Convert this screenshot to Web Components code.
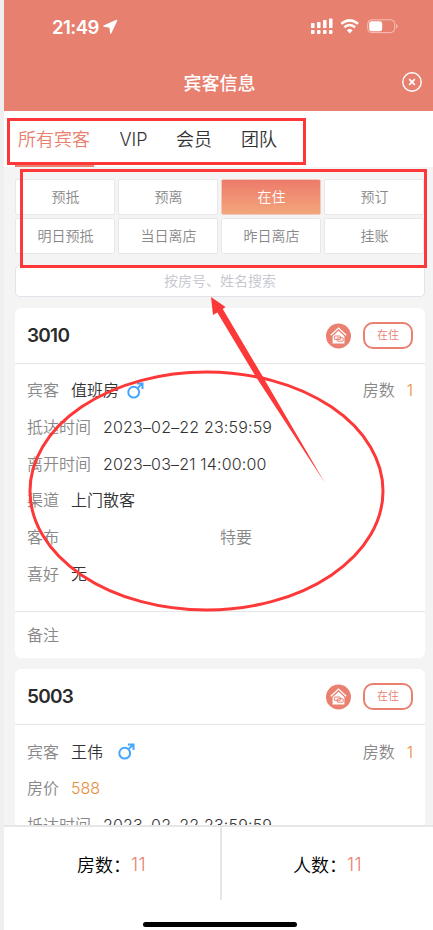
<!DOCTYPE html>
<html lang="zh-CN"><head><meta charset="utf-8"><title>宾客信息</title>
<style>
html,body{margin:0;height:930px;overflow:hidden}
body{background:#efefef;font-family:Inter,"Noto Sans CJK SC",sans-serif;-webkit-font-smoothing:antialiased}
</style></head><body>
<guest-app></guest-app>
<script>
const define=(name,html,init)=>customElements.define(name,class extends HTMLElement{
  constructor(){super();const r=this.attachShadow({mode:'open'});
    const t=document.createElement('template');t.innerHTML=html;r.append(t.content.cloneNode(true));}
  connectedCallback(){if(init)init(this,this.shadowRoot);}
});

define('status-bar',`<style>
:host{display:flex;box-sizing:border-box;height:54px;padding:0 35px 0 48px;align-items:center;color:#fff}
b{font-size:18.5px;font-weight:600;letter-spacing:-.5px;line-height:20px;width:50px;white-space:nowrap}
svg{display:block}.loc{margin-top:-1px}.r{margin-left:auto;margin-top:-1px}
</style><b>21:49</b>
<svg class="loc" width="16" height="16" viewBox="0 0 16 16"><path d="M14.6 1.4 1.9 7 7.9 8 8.8 14.1Z" fill="#fff" stroke="#fff" stroke-width="1.3" stroke-linejoin="round"/></svg>
<svg class="r" width="88" height="18" viewBox="0 0 88 18"><g fill="#fff">
<rect x="1" y="5" width="3.5" height="5" rx=".6"/><rect x="7" y="4" width="3.5" height="6" rx=".6"/><rect x="13" y="2" width="3.5" height="8" rx=".6"/><rect x="19" y=".5" width="3.5" height="9.5" rx=".6"/>
<rect x="1" y="12" width="3.5" height="4" rx=".9"/><rect x="7" y="12" width="3.5" height="4" rx=".9"/><rect x="13" y="12" width="3.5" height="4" rx=".9"/><rect x="19" y="12" width="3.5" height="4" rx=".9"/></g>
<g fill="none" stroke="#fff" stroke-width="2.6"><path d="M31.3 5.8Q39.7-1.2 48.1 5.8"/><path d="M34.3 9.2Q39.7 4.8 45.1 9.2"/></g><path d="M36.8 12.2Q39.7 9.9 42.6 12.2L39.7 15.4Z" fill="#fff"/>
<rect x="57.7" y="1.8" width="27" height="12.8" rx="4" fill="none" stroke="#fff" stroke-opacity=".5"/><rect x="59.2" y="3.2" width="13" height="10" rx="2.6" fill="#fff"/><path d="M86.2 6q1.3.4 1.3 2.2t-1.3 2.2z" fill="#fff" opacity=".55"/></svg>`);

define('title-bar',`<style>
:host{display:grid;grid-template-columns:42px 1fr 40px;height:57px;align-items:center;color:#fff;font-size:18px;font-weight:500;text-align:center}
svg{display:block;margin:-1px 0 0 8px}span{margin-top:-1px}
</style><i></i><span><slot></slot></span>
<svg width="22" height="22" viewBox="0 0 22 22" fill="none" stroke="#fff"><circle cx="11" cy="11" r="9.2" stroke-width="1.4"/><path d="m8.2 8.2 5.6 5.6m0-5.6-5.6 5.6" stroke-width="1.7"/></svg>`);

define('tab-item',`<style>
:host{display:block;height:56px;line-height:58px;font-size:18px;color:#333;box-sizing:border-box;white-space:nowrap;font-weight:350}
:host([active]){color:#ea8070;border-bottom:2px solid #ea8070;padding:0 4px 0 3px}
</style><slot></slot>`);
define('tab-row',`<style>:host{display:grid;grid-template-columns:104.5px 56.5px 65px 1fr;justify-items:start;padding-left:11px;height:56px;background:#fff}</style><slot></slot>`);

define('filter-chip',`<style>
:host{display:block;box-sizing:border-box;height:36px;border:1px solid #e8e8ea;border-radius:2px;background:#fff;color:#888;font-size:14px;line-height:34px;text-align:center;font-weight:350}
:host([active]){background:linear-gradient(#ed7b6a,#f3a67b);color:#fff;border-color:#f0c9bc}
</style><slot></slot>`);
define('filter-grid',`<style>:host{display:grid;grid-template-columns:repeat(4,100px);gap:3px;padding:12px 0 0 11.4px}</style><slot></slot>`);
define('search-box',`<style>
:host{display:block;box-sizing:border-box;height:32px;margin:11px 8px 0 11px;border:1px solid #e2e3ea;border-radius:5px;background:#fff;color:#c4c5ce;font-size:14px;line-height:30px;text-align:center;font-weight:350}
</style><slot></slot>`);

define('male-icon',`<style>:host{display:block;width:17px;height:17px;white-space:normal;line-height:0}svg{display:block}</style><svg width="17" height="17" viewBox="0 0 17 17" fill="none" stroke="#46a6ff" stroke-width="2"><circle cx="6.7" cy="10.2" r="5.4"/><path d="m10.4 6.4 4.7-4.6M9.9 1.5H15.5V7"/></svg>`);

define('info-row',`<style>
:host{display:flex;height:36.7px;line-height:36.7px;align-items:center;color:#333;font-size:16px;white-space:nowrap;font-weight:350}
.l{color:#888;margin-right:12px}
.v{display:flex;align-items:center;white-space:pre}
:host([date]) .v{letter-spacing:.17px}
:host([price]) .v{color:#e58e3c}
::slotted(male-icon){margin-left:8px}
.e{margin-left:auto;color:#888;display:flex}
</style><span class="l"></span><span class="v"><slot></slot></span><span class="e"><slot name="end"></slot></span>`,
(h,r)=>{r.querySelector('.l').textContent=h.getAttribute('label')});

define('guest-card',`<style>
:host{display:block;margin:0 8px 11px 11px;background:#fff;border-radius:6px}
header{display:flex;align-items:center;box-sizing:border-box;height:56px;padding:0 12px;border-bottom:1px solid #e6e6e6}
b{font-size:19px;font-weight:600;color:#2b2b2b;flex:1;letter-spacing:-.75px}
.s{box-sizing:border-box;width:50px;height:27px;line-height:23px;border:2px solid #ea8070;border-radius:10px;color:#ea8070;font-size:11px;text-align:center;margin-left:12px;font-weight:350}
.body{padding:8.4px 12px .6px}
</style><header><b></b>
<svg width="25" height="26" viewBox="0 0 25 26"><circle cx="12.5" cy="13" r="12.5" fill="#ea8070"/><path d="M4.8 12.3 12.5 5.1 20.2 12.3" fill="none" stroke="#fff" stroke-width="1.3"/><path d="M6.6 13.2 12.5 7.7 18.4 13.2V20.5H6.6Z" fill="#fff"/><g fill="none" stroke="#ea8070" stroke-width="1"><rect x="8.4" y="13" width="6" height="3.4" rx=".5"/><rect x="11.2" y="14.8" width="6" height="3.4" rx=".5"/></g></svg>
<span class="s">在住</span></header><div class="body"><slot></slot></div><slot name="foot"></slot>`,
(h,r)=>{r.querySelector('b').textContent=h.getAttribute('room')});
define('card-note',`<style>:host{display:block;height:47px;box-sizing:border-box;padding:0 12px;line-height:46px;margin-top:18px;border-top:1px solid #e6e6e6;color:#888;font-size:16px;font-weight:350}</style><slot></slot>`);

define('total-bar',`<style>
:host{display:block;height:105px;background:#fff;box-sizing:border-box;border-top:2px solid #e6e6e6;color:#000;font-size:18px;font-weight:350}
.c{display:grid;grid-template-columns:216px 1fr;height:73px}
.c span{display:flex;align-items:center;padding-left:73px;box-sizing:border-box;white-space:nowrap}
.c span+span{border-left:2px solid #e6e6e6;padding-left:71px}
em{font-style:normal;color:#ea8070;letter-spacing:.4px;margin-top:2px}
.h{width:154px;height:5px;border-radius:3px;background:#000;margin:22px 0 0 139px}
</style><div class="c"><span>房数：<em>11</em></span><span>人数：<em>11</em></span></div><div class="h"></div>`);

define('mark-layer',`<style>:host{position:absolute;left:0;top:0;width:433px;height:930px;pointer-events:none}svg{display:block}</style>
<svg width="433" height="930" fill="none" stroke="#fd3838" stroke-width="3"><rect x="8.5" y="119.5" width="296" height="44"/><rect x="21.5" y="170.5" width="404" height="96"/><ellipse cx="206.5" cy="491" rx="176.5" ry="119"/><path d="M211 297 225.5 307 222.8 309 263 377 325 483 256 377 217.3 312.5 213 315Z" fill="#fd3838" stroke="none"/></svg>`);

define('guest-app',`<style>
:host{display:block;position:relative;width:433px;height:930px;overflow:hidden}
.app{margin-left:4px;height:930px;display:flex;flex-direction:column;background:#f4f4f4}
.top{background:#e88070}
main{flex:1;min-height:0;overflow:hidden}
search-box{margin-bottom:11px}
.n{color:#e58e3c;margin-left:12px}
.mid{margin-right:161px}
</style><div class="app"><div class="top"><status-bar></status-bar><title-bar>宾客信息</title-bar></div>
<tab-row><tab-item active>所有宾客</tab-item><tab-item>VIP</tab-item><tab-item>会员</tab-item><tab-item>团队</tab-item></tab-row>
<main><filter-grid><filter-chip>预抵</filter-chip><filter-chip>预离</filter-chip><filter-chip active>在住</filter-chip><filter-chip>预订</filter-chip><filter-chip>明日预抵</filter-chip><filter-chip>当日离店</filter-chip><filter-chip>昨日离店</filter-chip><filter-chip>挂账</filter-chip></filter-grid>
<search-box>按房号、姓名搜索</search-box>
<guest-card room="3010"><info-row label="宾客">值班房<male-icon></male-icon><span slot="end">房数<span class="n">1</span></span></info-row>
<info-row label="抵达时间" date>2023–02–22 23:59:59</info-row><info-row label="离开时间" date>2023–03–21 14:00:00</info-row><info-row label="渠道">上门散客</info-row>
<info-row label="客布"><span slot="end" class="mid">特要</span></info-row><info-row label="喜好">无</info-row><card-note slot="foot">备注</card-note></guest-card>
<guest-card room="5003"><info-row label="宾客">王伟<male-icon style="margin-left:15px"></male-icon><span slot="end">房数<span class="n">1</span></span></info-row><info-row label="房价" price>588</info-row><info-row label="抵达时间" date>2023–02–22 23:59:59</info-row></guest-card>
</main><total-bar></total-bar></div><mark-layer></mark-layer>`);
</script></body></html>
